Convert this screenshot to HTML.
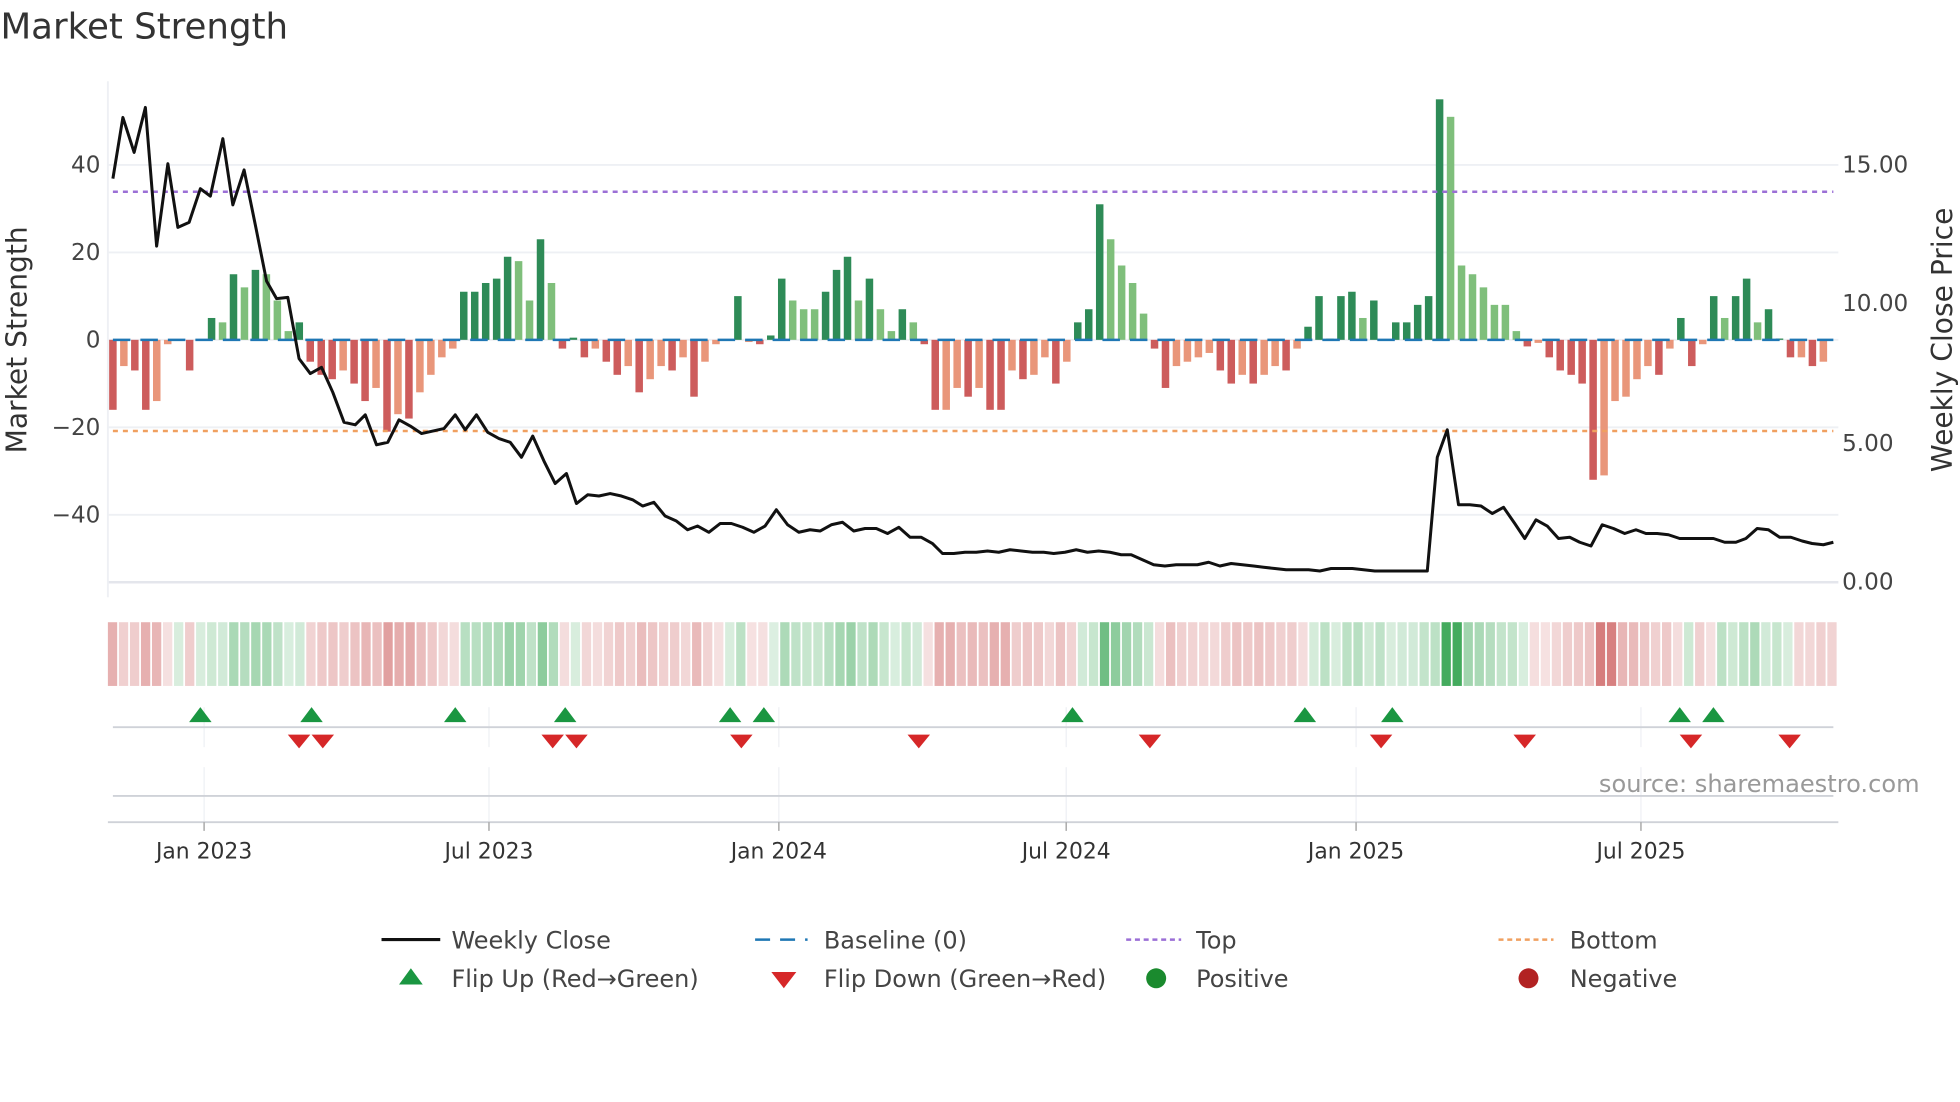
<!DOCTYPE html>
<html><head><meta charset="utf-8"><style>
html,body{margin:0;padding:0;background:#fff;}
svg{display:block;font-family:"DejaVu Sans","Liberation Sans",sans-serif;}
</style></head><body>
<svg id="s" width="1960" height="1102" viewBox="0 0 1568 882" xmlns="http://www.w3.org/2000/svg">
<rect width="1568" height="882" fill="#fff"/>
<text x="0" y="31" font-size="28.5" fill="#333">Market Strength</text>
<g stroke="#eef0f4" stroke-width="1.5">
<line x1="86" x2="1471" y1="132" y2="132"/><line x1="86" x2="1471" y1="202" y2="202"/>
<line x1="86" x2="1471" y1="272" y2="272"/><line x1="86" x2="1471" y1="342" y2="342"/>
<line x1="86" x2="1471" y1="412" y2="412"/><line x1="86" x2="1471" y1="466" y2="466" stroke="#e4e6ec" stroke-width="2"/>
<line x1="86" x2="86" y1="65" y2="478"/>
</g>
<g font-size="18.5" fill="#444" text-anchor="end">
<text x="80" y="138">40</text><text x="80" y="208">20</text><text x="80" y="278">0</text>
<text x="80" y="348">−20</text><text x="80" y="418">−40</text>
</g>
<g font-size="18.5" fill="#444">
<text x="1474" y="138">15.00</text><text x="1474" y="249">10.00</text><text x="1474" y="361">5.00</text><text x="1474" y="472">0.00</text>
</g>
<text transform="translate(21,272) rotate(-90)" font-size="22.5" fill="#333" text-anchor="middle">Market Strength</text>
<text transform="translate(1562,272) rotate(-90)" font-size="22.5" fill="#333" text-anchor="middle">Weekly Close Price</text>
<g id="bars"></g>
<line x1="90" x2="1467" y1="272" y2="272" stroke="#1f77b4" stroke-width="2" stroke-dasharray="14,8"/>
<line x1="90" x2="1467" y1="153.5" y2="153.5" stroke="#9b6fd6" stroke-width="2" stroke-dasharray="4,4"/>
<line x1="90" x2="1467" y1="345" y2="345" stroke="#f0a060" stroke-width="2" stroke-dasharray="4,4"/>
<polyline id="price" fill="none" stroke="#111" stroke-width="2.4" stroke-linejoin="round" points="90,143 98,94 107,122 116,86 125,197 134,131 142,182 151,178 160,151 168,157 178,111 186,164 195,136 204,180 213,225 221,239 230,238 239,287 248,299 257,294 266,314 275,338 284,340 292,332 301,356 310,354 319,336 328,341 337,347 346,345 355,343 364,332 372,344 381,332 390,346 399,351 408,354 417,366 426,349 435,369 444,387 453,379 461,403 470,396 479,397 488,395 497,397 506,400 514,405 523,402 532,413 541,417 550,424 558,421 567,426 576,419 585,419 594,422 603,426 612,421 621,408 630,420 639,426 648,424 656,425 665,420 674,418 683,425 692,423 701,423 710,427 719,422 728,430 737,430 746,435 754,443 763,443 772,442 781,442 790,441 799,442 808,440 817,441 826,442 835,442 843,443 852,442 861,440 870,442 879,441 888,442 897,444 905,444 914,448 923,452 932,453 941,452 950,452 958,452 967,450 976,453 985,451 994,452 1003,453 1011,454 1020,455 1029,456 1038,456 1047,456 1056,457 1065,455 1073,455 1082,455 1091,456 1100,457 1109,457 1118,457 1127,457 1136,457 1142,457 1150,366 1158,344 1167,404 1176,404 1185,405 1194,411 1203,406 1212,419 1220,431 1229,416 1238,421 1247,431 1256,430 1264,434 1273,437 1282,420 1291,423 1300,427 1309,424 1317,427 1326,427 1335,428 1344,431 1353,431 1362,431 1371,431 1380,434 1389,434 1397,431 1406,423 1415,424 1424,430 1433,430 1442,433 1450,435 1459,436 1467,434"/>
<g id="strip"></g>
<g stroke="#eef0f4" stroke-width="1">
<line x1="163" x2="163" y1="566" y2="598"/><line x1="391" x2="391" y1="566" y2="598"/><line x1="623" x2="623" y1="566" y2="598"/><line x1="853" x2="853" y1="566" y2="598"/><line x1="1085" x2="1085" y1="566" y2="598"/><line x1="1313" x2="1313" y1="566" y2="598"/>
<line x1="163" x2="163" y1="614" y2="658"/><line x1="391" x2="391" y1="614" y2="658"/><line x1="623" x2="623" y1="614" y2="658"/><line x1="853" x2="853" y1="614" y2="658"/><line x1="1085" x2="1085" y1="614" y2="658"/><line x1="1313" x2="1313" y1="614" y2="658"/>
</g>
<line x1="90" x2="1467" y1="582" y2="582" stroke="#cfd2d8" stroke-width="1.5"/>
<line x1="90" x2="1467" y1="637" y2="637" stroke="#cfd2d8" stroke-width="1.5"/>
<line x1="86" x2="1471" y1="658" y2="658" stroke="#cfd2d8" stroke-width="1.5"/>
<g stroke="#aaa" stroke-width="1.2">
<line x1="163" x2="163" y1="658" y2="665"/><line x1="391" x2="391" y1="658" y2="665"/><line x1="623" x2="623" y1="658" y2="665"/><line x1="853" x2="853" y1="658" y2="665"/><line x1="1085" x2="1085" y1="658" y2="665"/><line x1="1313" x2="1313" y1="658" y2="665"/>
</g>
<g font-size="17.5" fill="#333" text-anchor="middle">
<text x="163" y="687">Jan 2023</text><text x="391" y="687">Jul 2023</text><text x="623" y="687">Jan 2024</text><text x="853" y="687">Jul 2024</text><text x="1085" y="687">Jan 2025</text><text x="1313" y="687">Jul 2025</text>
</g>
<g id="flips"></g>
<text x="1536" y="634" font-size="19.3" fill="#999" text-anchor="end">source: sharemaestro.com</text>
<g font-size="19.2" fill="#444">
<line x1="305" x2="352" y1="752" y2="752" stroke="#111" stroke-width="2.5"/>
<text x="361" y="759">Weekly Close</text>
<line x1="604" x2="646" y1="752" y2="752" stroke="#1f77b4" stroke-width="2" stroke-dasharray="12,8"/>
<text x="659" y="759">Baseline (0)</text>
<line x1="901" x2="945" y1="752" y2="752" stroke="#9b6fd6" stroke-width="2" stroke-dasharray="4,3"/>
<text x="957" y="759">Top</text>
<line x1="1199" x2="1243" y1="752" y2="752" stroke="#f0a060" stroke-width="2" stroke-dasharray="4,3"/>
<text x="1256" y="759">Bottom</text>
<polygon points="319,788 338,788 328.5,775" fill="#1a9641"/>
<text x="361" y="790">Flip Up (Red→Green)</text>
<polygon points="617,778 637,778 627,791" fill="#d62728"/>
<text x="659" y="790">Flip Down (Green→Red)</text>
<circle cx="925" cy="783" r="8" fill="#1a8a2e"/>
<text x="957" y="790">Positive</text>
<circle cx="1223" cy="783" r="8" fill="#b22222"/>
<text x="1256" y="790">Negative</text>
</g>
</svg>
<script>
var V=[[-16,'d'],[-6,'l'],[-7,'d'],[-16,'d'],[-14,'l'],[-1,'l'],[0,'l'],[-7,'d'],[0,'l'],[5,'d'],[4,'l'],[15,'d'],[12,'l'],[16,'d'],[15,'l'],[9,'l'],[2,'l'],[4,'d'],[-5,'d'],[-8,'d'],[-9,'d'],[-7,'l'],[-10,'d'],[-14,'d'],[-11,'l'],[-21,'d'],[-17,'l'],[-18,'d'],[-12,'l'],[-8,'l'],[-4,'l'],[-2,'l'],[11,'d'],[11,'d'],[13,'d'],[14,'d'],[19,'d'],[18,'l'],[9,'l'],[23,'d'],[13,'l'],[-2,'d'],[0.5,'d'],[-4,'d'],[-2,'l'],[-5,'d'],[-8,'d'],[-6,'l'],[-12,'d'],[-9,'l'],[-6,'l'],[-7,'d'],[-4,'l'],[-13,'d'],[-5,'l'],[-1,'l'],[0,'l'],[10,'d'],[-0.5,'l'],[-1,'d'],[1,'d'],[14,'d'],[9,'l'],[7,'l'],[7,'l'],[11,'d'],[16,'d'],[19,'d'],[9,'l'],[14,'d'],[7,'l'],[2,'l'],[7,'d'],[4,'l'],[-1,'d'],[-16,'d'],[-16,'l'],[-11,'l'],[-13,'d'],[-11,'l'],[-16,'d'],[-16,'d'],[-7,'l'],[-9,'d'],[-8,'l'],[-4,'l'],[-10,'d'],[-5,'l'],[4,'d'],[7,'d'],[31,'d'],[23,'l'],[17,'l'],[13,'l'],[6,'l'],[-2,'d'],[-11,'d'],[-6,'l'],[-5,'l'],[-4,'l'],[-3,'l'],[-7,'d'],[-10,'d'],[-8,'l'],[-10,'d'],[-8,'l'],[-6,'l'],[-7,'d'],[-2,'l'],[3,'d'],[10,'d'],[0.3,'l'],[10,'d'],[11,'d'],[5,'l'],[9,'d'],[0,'d'],[4,'d'],[4,'d'],[8,'d'],[10,'d'],[55,'d'],[51,'l'],[17,'l'],[15,'l'],[12,'l'],[8,'l'],[8,'l'],[2,'l'],[-1.5,'d'],[-0.7,'l'],[-4,'d'],[-7,'d'],[-8,'d'],[-10,'d'],[-32,'d'],[-31,'l'],[-14,'l'],[-13,'l'],[-9,'l'],[-6,'l'],[-8,'d'],[-2,'l'],[5,'d'],[-6,'d'],[-1,'l'],[10,'d'],[5,'l'],[10,'d'],[14,'d'],[4,'l'],[7,'d'],[0.3,'d'],[-4,'d'],[-4,'l'],[-6,'d'],[-5,'l']];
var NS='http://www.w3.org/2000/svg';
function el(t,a,p){var e=document.createElementNS(NS,t);for(var k in a)e.setAttribute(k,a[k]);p.appendChild(e);return e;}
var bars=document.getElementById('bars'),strip=document.getElementById('strip'),fl=document.getElementById('flips');
var step=(1459-90)/(V.length-1);
var sstep=(1471-86)/V.length;
V.forEach(function(b,i){
 var x=90+i*step,v=b[0],h=Math.abs(v)*3.5;
 var c=v>=0?(b[1]=='d'?'#2e8b57':'#7fbf7b'):(b[1]=='d'?'#cd5c5c':'#e9967a');
 if(h>0.3)el('rect',{x:x-3,y:v>0?272-h:272,width:6,height:h,fill:c},bars);
 var a=Math.abs(v), sc=v>=0?'#3aa655':'#c85050';
 var op=Math.min(0.95,0.16+a/55);
 if(v>=0&&a<1)op=0.2;
 el('rect',{x:86+i*sstep,y:498,width:sstep-1.4,height:51,fill:sc,'fill-opacity':op},strip);
});
[160,249,364,452,584,611,858,1044,1114,1344,1371].forEach(function(x){el('polygon',{points:(x-9)+',578 '+(x+9)+',578 '+x+',566',fill:'#1a9641'},fl);});
[239,258,442,461,593,735,920,1105,1220,1353,1432].forEach(function(x){el('polygon',{points:(x-9)+',588 '+(x+9)+',588 '+x+',599',fill:'#d62728'},fl);});
</script>
</body></html>
